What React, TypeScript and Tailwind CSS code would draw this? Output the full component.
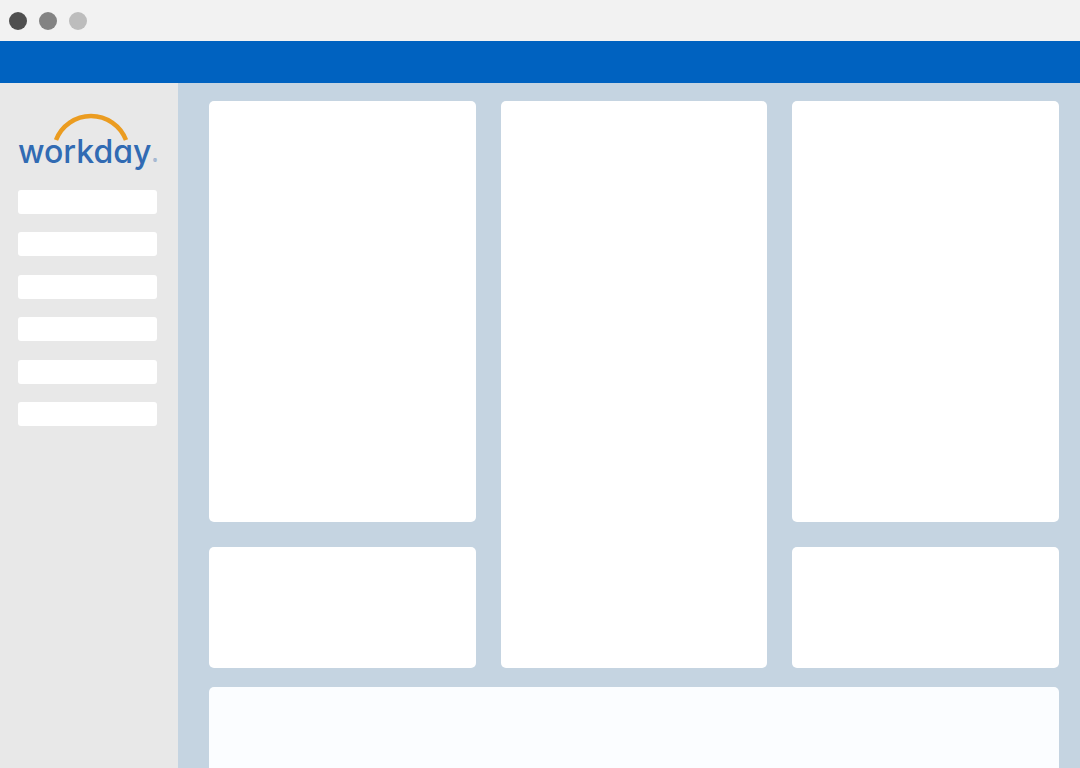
import React from "react";

const navItems = [0, 1, 2, 3, 4, 5];

function WindowBar() {
  return (
    <div className="flex h-[41px] shrink-0 items-center gap-3 bg-[#f2f2f2] px-[9px]">
      <span className="size-[18px] rounded-full bg-[#4f4f4f]" />
      <span className="size-[18px] rounded-full bg-[#838383]" />
      <span className="size-[18px] rounded-full bg-[#bdbdbd]" />
    </div>
  );
}

function Logo() {
  return (
    <svg viewBox="0 0 144 64" className="block h-16 w-36 shrink-0" role="img" aria-label="workday">
      <path
        d="M38 33 A37.5 37.5 0 0 1 108 33"
        fill="none"
        stroke="#eb9c20"
        strokeWidth="4.5"
      />
      <text
        x="0"
        y="56"
        fill="#316bb3"
        fontSize="32"
        fontWeight="500"
        style={{ fontFamily: 'Inter, "Noto Sans", sans-serif', fontFeatureSettings: '"cv11" 1' }}
      >
        workday
      </text>
      <text x="135" y="56" fill="#6f93c2" fontSize="6" style={{ fontFamily: "Inter, sans-serif" }}>
        ®
      </text>
    </svg>
  );
}

function Sidebar() {
  return (
    <aside className="flex w-[178px] shrink-0 flex-col bg-[#e8e8e8] pt-6 pl-[18px]">
      <Logo />
      <nav className="mt-[19px] mr-[21px] flex h-[236px] flex-col justify-between">
        {navItems.map((item) => (
          <div key={item} className="h-6 rounded-[3px] bg-white" />
        ))}
      </nav>
    </aside>
  );
}

export default function App() {
  return (
    <div className="flex min-h-screen flex-col">
      <WindowBar />
      <header className="h-[42px] shrink-0 bg-[#0062c0]" />
      <div className="flex flex-1">
        <Sidebar />
        <main className="flex flex-1 flex-col bg-[#c5d4e1] pt-[18px] pr-[21px] pl-[31px]">
          <div className="grid grid-cols-3 grid-rows-[421px_121px] gap-[25px]">
            <section className="rounded-[5px] bg-white" />
            <section className="row-span-2 rounded-[5px] bg-white" />
            <section className="rounded-[5px] bg-white" />
            <section className="rounded-[5px] bg-white" />
            <section className="rounded-[5px] bg-white" />
          </div>
          <section className="mt-[19px] flex-1 rounded-t-[5px] bg-[#fbfdff]" />
        </main>
      </div>
    </div>
  );
}
